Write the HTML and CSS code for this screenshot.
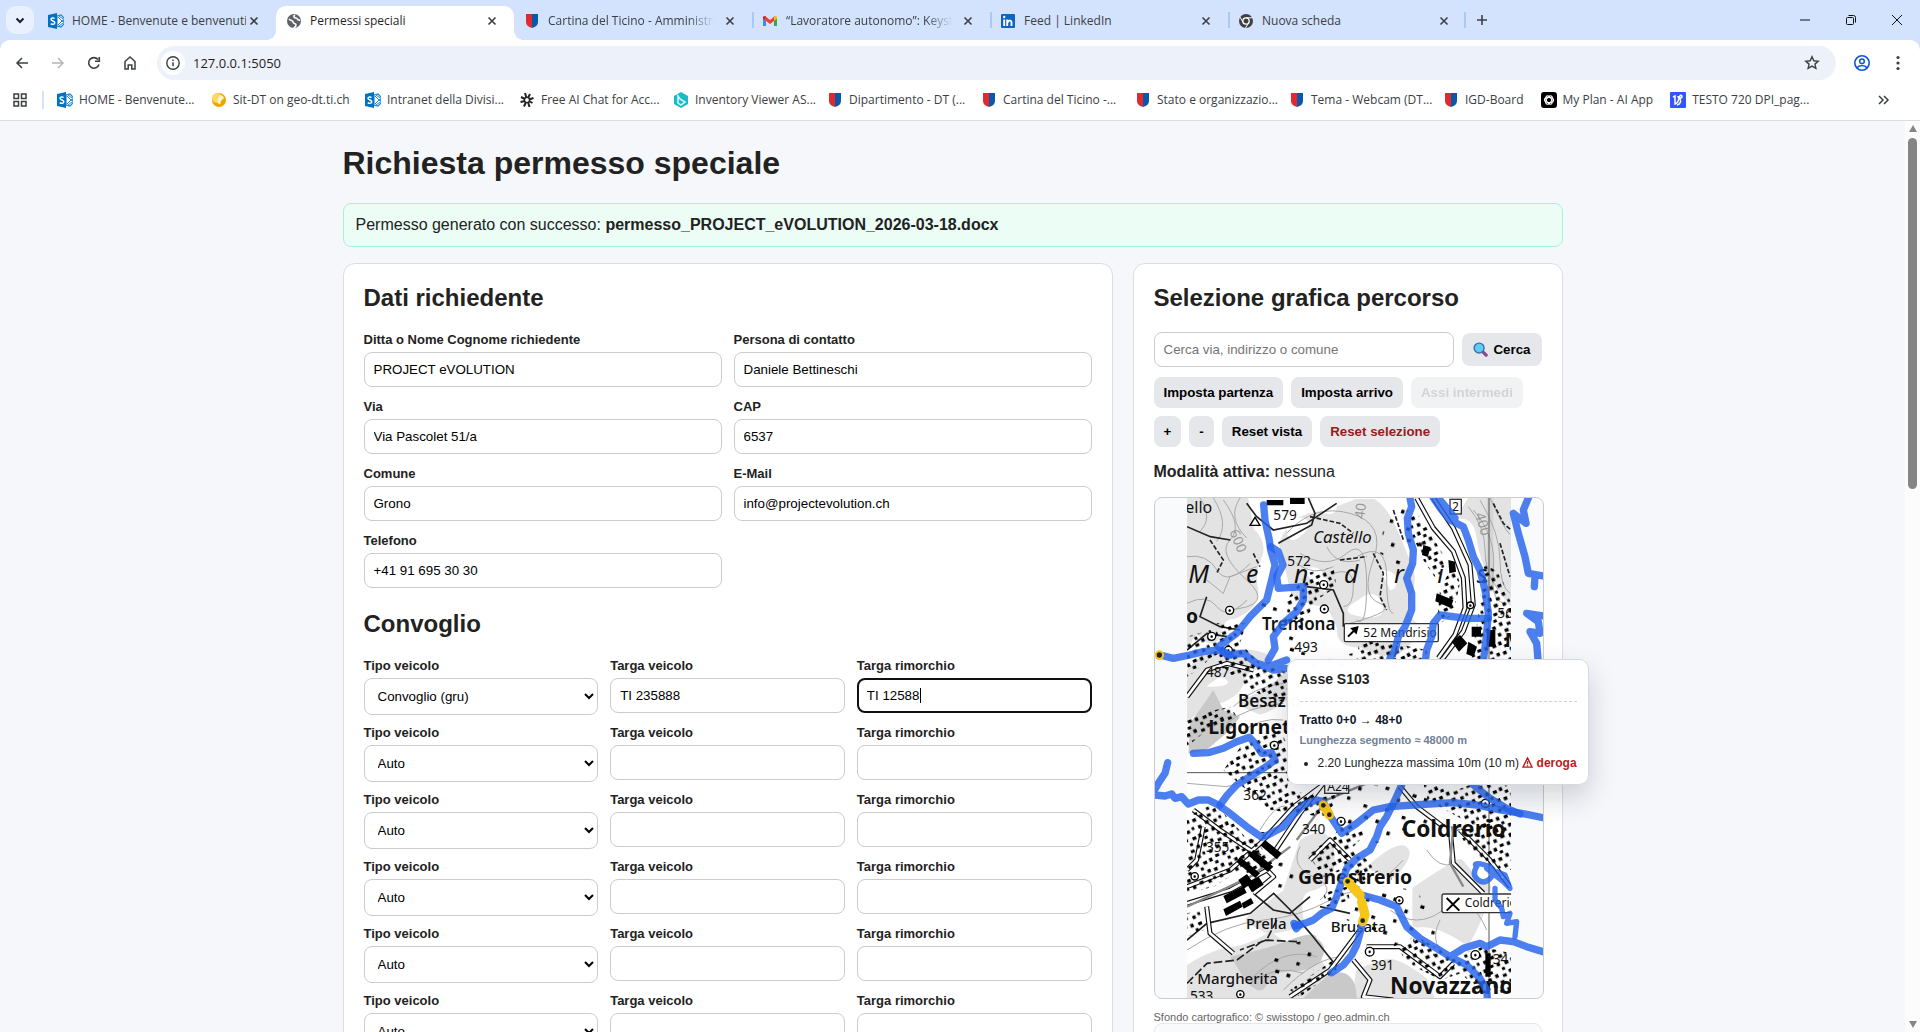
FILE: index.html
```html
<!DOCTYPE html>
<html lang="it">
<head>
<meta charset="utf-8">
<title>Permessi speciali</title>
<link rel="stylesheet" href="styles.css">
</head>
<body>
<svg class="defs" aria-hidden="true">
  <symbol id="sharepoint" viewBox="0 0 16 16"><path d="M9 3l4-1 3 3v2l-2 1 2 1v2l-3 3-4-1z" fill="#fff" stroke="#1b86d6" stroke-width="1.2"/><path d="M10 4l4 4-4 4M11 3l4 3M11 13l4-3" fill="none" stroke="#1b86d6" stroke-width="1"/><path d="M0 2l9-2v16l-9-2z" fill="#0072c6"/><path d="M6.600 5.500C5.500 4.700 3 4.600 3 6.300c0 2 3.800 1.400 3.800 3.500 0 1.800-2.700 1.800-4 .8" fill="none" stroke="#fff" stroke-width="1.500"/></symbol>
  <symbol id="shield" viewBox="0 0 12 16"><path d="M0 1h6v14C2 14 0 12 0 9z" fill="#e22a2e"/><path d="M6 1h6v8c0 3-2 5-6 6z" fill="#0a58a8"/></symbol>
  <symbol id="x" viewBox="0 0 16 16"><path d="M4.500 4.500l7 7m0-7l-7 7" stroke="#3c4043" stroke-width="1.600"/></symbol>
</svg>

<header class="browser">
  <div class="tabstrip">
    <button class="tab-search" aria-label="Cerca schede"><svg viewBox="0 0 16 16" width="16" height="16"><path d="M4.500 6.500L8 10l3.500-3.500" fill="none" stroke="#1f1f1f" stroke-width="2"/></svg></button>
    <div class="tab"><svg class="fav"><use href="#sharepoint"/></svg><span class="tab-title">HOME - Benvenute e benvenuti</span><button class="close" aria-label="Chiudi"><svg><use href="#x"/></svg></button></div>
    <div class="tab active"><svg class="fav" viewBox="0 0 16 16"><circle cx="8" cy="8" r="7" fill="#5f6368"/><path d="M3 6c2 2 4 1 4 3s3 1 3 3-2 2-2 3M9 2c-2 1-1 3 1 3s1 3 4 2" fill="none" stroke="#fff" stroke-width="1.600"/></svg><span class="tab-title">Permessi speciali</span><button class="close" aria-label="Chiudi"><svg><use href="#x"/></svg></button></div>
    <div class="tab"><svg class="fav"><use href="#shield"/></svg><span class="tab-title fade">Cartina del Ticino - Amministraz</span><button class="close" aria-label="Chiudi"><svg><use href="#x"/></svg></button></div>
    <div class="tab line"><svg class="fav" viewBox="0 0 16 16"><path d="M1 4v9h3V7.500z" fill="#4285f4"/><path d="M15 4v9h-3V7.500z" fill="#34a853"/><path d="M1 3.500L4 3v4.500l-3-2z" fill="#c5221f"/><path d="M3 3l5 4 5-4v4.200L8 11 3 7.200z" fill="#ea4335"/><path d="M12 3.500c1-1 3-.8 3 .8v1.200l-3 2.300z" fill="#fbbc04"/></svg><span class="tab-title fade">“Lavoratore autonomo”: Keysto</span><button class="close" aria-label="Chiudi"><svg><use href="#x"/></svg></button></div>
    <div class="tab line"><svg class="fav" viewBox="0 0 16 16"><rect x="1" y="1" width="14" height="14" rx="1" fill="#0a66c2"/><path d="M4.200 6.500V13M7.200 13V6.500M7.500 10c0-3 4-3.300 4-.5V13" fill="none" stroke="#fff" stroke-width="1.900"/><circle cx="4.200" cy="4" r="1.200" fill="#fff"/></svg><span class="tab-title">Feed | LinkedIn</span><button class="close" aria-label="Chiudi"><svg><use href="#x"/></svg></button></div>
    <div class="tab line last"><svg class="fav" viewBox="0 0 16 16"><circle cx="8" cy="8" r="7" fill="#3c4043"/><circle cx="8" cy="8" r="3.200" fill="#3c4043" stroke="#fff" stroke-width="1.300"/><path d="M8 4.800h6.500M5.200 9.600L2 4M10.700 9.700L7.500 15" stroke="#fff" stroke-width="1"/></svg><span class="tab-title">Nuova scheda</span><button class="close" aria-label="Chiudi"><svg><use href="#x"/></svg></button></div>
    <button class="icon-btn" aria-label="Nuova scheda"><svg viewBox="0 0 16 16" width="16" height="16"><path d="M8 3v10M3 8h10" stroke="#3c4043" stroke-width="1.600"/></svg></button>
    <div class="window-buttons">
      <button aria-label="Riduci"><svg viewBox="0 0 12 12" width="12" height="12"><path d="M1 6h10" stroke="#111"/></svg></button>
      <button aria-label="Ripristina"><svg viewBox="0 0 12 12" width="12" height="12"><path d="M3.500 1.500h5q2 0 2 2v5" fill="none" stroke="#111"/><rect x="1.500" y="3.500" width="7" height="7" rx="1" fill="none" stroke="#111"/></svg></button>
      <button aria-label="Chiudi finestra"><svg viewBox="0 0 12 12" width="12" height="12"><path d="M1 1l10 10M11 1L1 11" stroke="#111"/></svg></button>
    </div>
  </div>
  <div class="toolbar">
    <button class="nav" aria-label="Indietro"><svg viewBox="0 0 16 16" width="16" height="16"><path d="M14 8H3M8 3L3 8l5 5" fill="none" stroke="#3c4043" stroke-width="1.500"/></svg></button>
    <button class="nav" aria-label="Avanti"><svg viewBox="0 0 16 16" width="16" height="16"><path d="M2 8h11M8 3l5 5-5 5" fill="none" stroke="#b4b6b9" stroke-width="1.500"/></svg></button>
    <button class="nav" aria-label="Ricarica"><svg viewBox="0 0 16 16" width="16" height="16"><path d="M13 9.500A5.300 5.300 0 1 1 12 4.500M13.300 2v4.300H9" fill="none" stroke="#3c4043" stroke-width="1.600"/></svg></button>
    <button class="nav" aria-label="Pagina iniziale"><svg viewBox="0 0 16 16" width="16" height="16"><path d="M3 6.500L8 2l5 4.500V14h-3.200v-4H6.200v4H3z" fill="none" stroke="#3c4043" stroke-width="1.500"/></svg></button>
    <div class="omnibox">
      <span class="info"><svg viewBox="0 0 16 16" width="16" height="16"><circle cx="8" cy="8" r="6.200" fill="none" stroke="#3c4043" stroke-width="1.400"/><path d="M8 7.200v4M8 4.500v1.500" stroke="#3c4043" stroke-width="1.500"/></svg></span>
      <input class="url" aria-label="Indirizzo" value="127.0.0.1:5050">
      <button class="star" aria-label="Preferiti"><svg viewBox="0 0 16 16" width="16" height="16"><path d="M8 1.800l1.800 4 4.400.4-3.300 2.900 1 4.300L8 11.100l-3.900 2.300 1-4.300-3.300-2.900 4.400-.4z" fill="none" stroke="#3c4043" stroke-width="1.400"/></svg></button>
    </div>
    <button class="nav" aria-label="Profilo"><svg viewBox="0 0 18 18" width="18" height="18"><circle cx="9" cy="9" r="7.200" fill="none" stroke="#0b57d0" stroke-width="1.600"/><circle cx="9" cy="7.200" r="2.300" fill="none" stroke="#0b57d0" stroke-width="1.500"/><path d="M4 13.800c2-3 8-3 10 0" fill="none" stroke="#0b57d0" stroke-width="1.600"/></svg></button>
    <button class="nav" aria-label="Menu"><svg viewBox="0 0 16 16" width="16" height="16" fill="#3c4043"><circle cx="8" cy="2.500" r="1.600"/><circle cx="8" cy="8" r="1.600"/><circle cx="8" cy="13.500" r="1.600"/></svg></button>
  </div>
  <nav class="bookmarks">
    <svg class="apps" viewBox="0 0 16 16" width="16" height="16"><path d="M2 2h4.500v4.500H2zM9.500 2H14v4.500H9.500zM2 9.500h4.500V14H2zM9.500 9.500H14V14H9.500z" fill="none" stroke="#3c4043" stroke-width="1.500"/></svg>
    <a class="bm long first" href="#"><svg class="fav"><use href="#sharepoint"/></svg>HOME - Benvenute...</a>
    <a class="bm long" href="#"><svg class="fav" viewBox="0 0 16 16"><circle cx="8" cy="8" r="7" fill="#e9a800"/><circle cx="6" cy="6" r="5" fill="#ffd766"/><path d="M9 3c4 0 5 4 2 5s0 3-2 4-3-3-2-5z" fill="#fff3cf"/></svg>Sit-DT on geo-dt.ti.ch</a>
    <a class="bm long" href="#"><svg class="fav"><use href="#sharepoint"/></svg>Intranet della Divisi...</a>
    <a class="bm long" href="#"><svg class="fav" viewBox="0 0 16 16"><path d="M6 1l1.500 5M11 2L9 6M2 5l4 2M14.500 6L10 7.500M1.500 10L6 9M13.500 11L10 9M5 14.500L7 10M10.500 15L9 10" stroke="#222" stroke-width="2"/><circle cx="8" cy="8" r="2.600" fill="none" stroke="#222" stroke-width="1.400"/></svg>Free AI Chat for Acc...</a>
    <a class="bm long" href="#"><svg class="fav" viewBox="0 0 16 16"><path d="M8 0l7 4v8l-7 4-7-4V4z" fill="#1fb8c9"/><path d="M5 4v7l3 2 4-3-5-3z" fill="none" stroke="#d5fbff" stroke-width="1.500"/></svg>Inventory Viewer AS...</a>
    <a class="bm long" href="#"><svg class="fav"><use href="#shield"/></svg>Dipartimento - DT (...</a>
    <a class="bm long" href="#"><svg class="fav"><use href="#shield"/></svg>Cartina del Ticino -...</a>
    <a class="bm long" href="#"><svg class="fav"><use href="#shield"/></svg>Stato e organizzazio...</a>
    <a class="bm long" href="#"><svg class="fav"><use href="#shield"/></svg>Tema - Webcam (DT...</a>
    <a class="bm" href="#"><svg class="fav"><use href="#shield"/></svg>IGD-Board</a>
    <a class="bm" href="#"><svg class="fav" viewBox="0 0 16 16"><rect width="16" height="16" rx="3" fill="#000"/><g fill="none" stroke="#fff" stroke-width="1.100"><ellipse cx="8" cy="8" rx="4.600" ry="2.600"/><ellipse cx="8" cy="8" rx="4.600" ry="2.600" transform="rotate(60 8 8)"/><ellipse cx="8" cy="8" rx="4.600" ry="2.600" transform="rotate(120 8 8)"/></g></svg>My Plan - AI App</a>
    <a class="bm" href="#"><svg class="fav" viewBox="0 0 16 16"><rect width="16" height="16" rx="1" fill="#3355ff"/><path d="M3 5l2-1v8c4-1 4-5 4-8M8 4c0 3 4 3 4 0-2-2-3 1-2 3s1 5-3 6" fill="none" stroke="#fff" stroke-width="1.500"/></svg>TESTO 720 DPI_pag...</a>
    <button class="more" aria-label="Altri preferiti"><svg viewBox="0 0 16 16" width="16" height="16"><path d="M3 4l4 4-4 4M8 4l4 4-4 4" fill="none" stroke="#3c4043" stroke-width="1.500"/></svg></button>
  </nav>
</header>

<div class="viewport">
<main class="page">
<div class="container">
  <h1>Richiesta permesso speciale</h1>
  <div class="alert">Permesso generato con successo: <strong>permesso_PROJECT_eVOLUTION_2026-03-18.docx</strong></div>
  <div class="layout">
    <form class="card">
      <h2>Dati richiedente</h2>
      <div class="grid two">
        <label class="field">Ditta o Nome Cognome richiedente<input type="text" value="PROJECT eVOLUTION"></label>
        <label class="field">Persona di contatto<input type="text" value="Daniele Bettineschi"></label>
        <label class="field">Via<input type="text" value="Via Pascolet 51/a"></label>
        <label class="field">CAP<input type="text" value="6537"></label>
        <label class="field">Comune<input type="text" value="Grono"></label>
        <label class="field">E-Mail<input type="text" value="info@projectevolution.ch"></label>
        <label class="field">Telefono<input type="text" value="+41 91 695 30 30"></label>
      </div>
      <h2 class="next">Convoglio</h2>
      <div class="grid three">
        <label class="field">Tipo veicolo<select><option>Convoglio (gru)</option></select></label>
        <label class="field">Targa veicolo<input type="text" value="TI 235888"></label>
        <label class="field">Targa rimorchio<input class="focused" type="text" value="TI 12588"><span class="caret"></span></label>
        <label class="field">Tipo veicolo<select><option>Auto</option></select></label>
        <label class="field">Targa veicolo<input type="text"></label>
        <label class="field">Targa rimorchio<input type="text"></label>
        <label class="field">Tipo veicolo<select><option>Auto</option></select></label>
        <label class="field">Targa veicolo<input type="text"></label>
        <label class="field">Targa rimorchio<input type="text"></label>
        <label class="field">Tipo veicolo<select><option>Auto</option></select></label>
        <label class="field">Targa veicolo<input type="text"></label>
        <label class="field">Targa rimorchio<input type="text"></label>
        <label class="field">Tipo veicolo<select><option>Auto</option></select></label>
        <label class="field">Targa veicolo<input type="text"></label>
        <label class="field">Targa rimorchio<input type="text"></label>
        <label class="field">Tipo veicolo<select><option>Auto</option></select></label>
        <label class="field">Targa veicolo<input type="text"></label>
        <label class="field">Targa rimorchio<input type="text"></label>
      </div>
    </form>

    <section class="card">
      <h2>Selezione grafica percorso</h2>
      <div class="search">
        <input type="text" aria-label="Cerca" placeholder="Cerca via, indirizzo o comune">
        <button class="btn find"><svg viewBox="0 0 16 16" width="15" height="15"><path d="M10 10l4 4" stroke="#86488f" stroke-width="3.500" stroke-linecap="round"/><circle cx="6.500" cy="6.500" r="5.300" fill="#5fcdf0" stroke="#3b6fb0" stroke-width="1.500"/></svg>Cerca</button>
      </div>
      <div class="buttons">
        <button class="btn">Imposta partenza</button>
        <button class="btn">Imposta arrivo</button>
        <button class="btn" disabled>Assi intermedi</button>
      </div>
      <div class="buttons">
        <button class="btn">+</button>
        <button class="btn">-</button>
        <button class="btn">Reset vista</button>
        <button class="btn danger">Reset selezione</button>
      </div>
      <p class="mode"><strong>Modalità attiva:</strong> nessuna</p>
      <div class="map">
        <svg class="map-svg" viewBox="45 24 1164 1500" preserveAspectRatio="xMidYMid slice">
          <defs>
            <clipPath id="tile"><rect x="141" y="24" width="972" height="1500"/></clipPath>
            <pattern id="houses" width="88" height="80" patternUnits="userSpaceOnUse" patternTransform="rotate(-24)">
              <path d="M4 6h11v10H4zM28 2h10v11H28zM50 10h12v9H50zM72 3h10v10H72zM12 30h10v11H12zM36 26h12v10H36zM62 32h10v10H62zM2 54h10v11H2zM24 50h12v9H24zM46 52h10v11H46zM70 56h12v10H70zM80 28h8v9H80zM16 68h10v9H16zM56 70h9v9H56z" fill="#000"/>
            </pattern>
            <pattern id="sparse" width="120" height="104" patternUnits="userSpaceOnUse" patternTransform="rotate(17)">
              <path d="M6 10h11v10H6zM48 34h10v11H48zM90 8h12v10H90zM24 72h10v10H24zM78 80h11v10H78z" fill="#000"/>
            </pattern>
          </defs>
          <g clip-path="url(#tile)">
            <rect x="141" y="24" width="972" height="1500" fill="#fff"/>
            <g fill="#e3e3e3" stroke="#e3e3e3" stroke-width="26" stroke-linejoin="round">
              <path d="M141 24h170l20 100q40 40 20 80t-10 90-60 80q-40 0-50 50t-60-10l-40 50z"/>
              <path d="M430 160q30-70 90-80t130-40h50q30 20 55 75t40 95q30 50 5 110t25 90q-20 50-55 70t-105-20q-70 0-60-45-30-80-60-80t-80-30z"/>
              <path d="M1000 24h113v310q-30-50-55-85t-35-105-55-70z"/>
              <path d="M141 560q40-50 70-60t100-10q90 10 60 30-60 10-70 50t-70 60-90 50z"/>
              <path d="M310 640q70-20 130-80v50q-40 40-80 50z"/>
              <path d="M490 1060q90-60 80 70-10 50-60 60t-30 110q-40 10-90 20l-60-30 110-80z"/>
              <path d="M700 1130q70-60 90-50t-30 70zM830 1200q90-60 130-80 60 80 80 70-10 70-60 160-90-60-150-50z"/>
              <path d="M141 1440q80-50 130-55t120-45q70 50 100 40t50 55 50 89H141z"/>
              <path d="M660 1450q60-30 90-30t100 54l20 50H650z"/>
            </g>
            <g fill="#fff">
              <path d="M655 330q50-40 70 10t-60 40-10-50zM440 110q40-40 60-20t-20 50-40-30zM540 50q50-30 50 0t-40 20zM490 240q40-20 60 10t10 50-70-60z"/>
              <path d="M200 590q40-40 60-20t-60 20zM720 240q50 0 50 30t-20 30z"/>
            </g>
            <g fill="#c9c9c9">
              <path d="M150 700l50-70 20-30 30 60 50 20-30 40-70 60-55 10z"/>
              <path d="M270 1400q100-20 180-50t80-5q30 20 20 50t-40 40-70 10-60 40-70-20q-20-40-40-65z"/>
              <path d="M570 1450q40-10 60 10t20 64H490z"/>
              <path d="M1040 24h20v280h-20z" fill="#d5d5d5"/>
            </g>
            <g fill="none" stroke="#a9a9a9" stroke-width="3">
              <path d="M180 24q40 60 0 100M250 30q60 80 20 120t50 120-60 90M200 270l50 40 20-50 80-30M141 200q60-10 90 40t100-20M300 24q-40 60 20 120M141 340q60-30 90 10t90-20M220 24q50 80 10 130"/>
              <path d="M440 130q80-90 190-60t70 140 20 130-90 60M480 190q80 50 140 0t60 90-30 110M650 200q90-50 90 60t20 110M560 170q30 60 100 40M580 250q60-20 60 40t-30 60M470 220q50 40 110 10"/>
              <path d="M1000 60q70 80 60 180t40 100M1020 30q60 100 60 180t30 100M1050 24q40 90 60 110M985 50q50 60 50 130t40 120"/>
              <path d="M280 650q60-60 150-70M260 700q60-50 170-60M141 880l120 10 100-30M360 1020q60-100 90-60M300 730q60-50 130-40"/>
              <path d="M141 1380q120-80 230-90t200-60 130 0M430 1500q100-100 180-100M330 1480q80-60 160-30M750 1260q80 60 160 0t130 60M790 1110l-40 40 5 20M860 1080q40 60 80 40M900 1290q-40 80 40 120M340 1460q90-90 190-60M480 1070q-30 60 40 90t20 70"/>
            </g>
            <path d="M141 848h470M1047 24v1500" stroke="#555" stroke-width="3"/>
            <g fill="none" stroke="#222" stroke-width="5">
              <path d="M320 40l30 40 50 40 100-20 90-60M415 160l100-55 10-35-20-46M200 320l-20 60 60 30 60 10M141 480l60-50 60 10M500 290l80 10 30 70v40M141 110l70 30 60 10" />
              <path d="M141 1350l60-50 130-30 70-60 50 50 60 70 80 100M540 1250l90 20M340 1210l60 50 50 10 60-50"/>
              <path d="M410 1290l-30 60-80 30M141 1480l60-60 90-10 80-60 100 5" stroke-dasharray="26 9"/>
              <path d="M510 80l90 20 40 30M700 190l30 60-10 70 20 40M210 150l40 60-20 40M600 210l80-10M760 60l30 90M760 520l20-100M1060 40l30 60 23 20M1080 160l30 100M340 190l20 40" stroke-dasharray="14 6"/>
            </g>
            <!-- main roads: dark casing with a white core -->
            <g fill="none" stroke="#111" stroke-width="15" stroke-linejoin="round">
              <path d="M830 24l50 90 60 70 30 80 5 90-30 80-50 70M880 24l60 90 50 110 10 120-30 80-60 80M141 620l60-80 60-20 80 20M141 1190l130-50 90-80 100-110 80-60M400 1090l80-120 70-90M190 1010l-20 100-29 30M160 960l80 60 120 80M141 1240l130-40 110-60 20 20-60 50M200 1250l10 80 70 60M450 1520l120-80 90-120M680 1370h100l120 90 40-40M780 890l50 60 80 60M930 1010l10 110 90 90M960 1020l90 90 60 80M640 1410l50 60-20 50 90 10M510 1110l60-60 60 60"/>
            </g>
            <g fill="none" stroke="#fff" stroke-width="8" stroke-linejoin="round">
              <path d="M830 24l50 90 60 70 30 80 5 90-30 80-50 70M880 24l60 90 50 110 10 120-30 80-60 80M141 620l60-80 60-20 80 20M141 1190l130-50 90-80 100-110 80-60M400 1090l80-120 70-90M190 1010l-20 100-29 30M160 960l80 60 120 80M141 1240l130-40 110-60 20 20-60 50M200 1250l10 80 70 60M450 1520l120-80 90-120M680 1370h100l120 90 40-40M780 890l50 60 80 60M930 1010l10 110 90 90M960 1020l90 90 60 80M640 1410l50 60-20 50 90 10M510 1110l60-60 60 60"/>
            </g>
            <g fill="none" stroke="#888" stroke-width="7"><path d="M940 1010l-10 110 40 70M470 1050l90-120 120-50M141 1250l190-90 120-90"/></g>
            <g fill="url(#houses)">
              <path d="M141 440l70-20 30 60-70 60-29 20zM230 400h90l-20 60 60 60 90 30v90l-80-20-90-60-60-60z"/>
              <path d="M440 330l60-80 80-20 10 60-60 40-50 90-40-30zM660 440l100 20 100 20v30H650zM800 60l40 20 80 130-30 60-40-60-40-90z"/>
              <path d="M900 300l40-80 20 60-20 90-50 40zM1030 220l50 30 33 90v170h-120l20-120z"/>
              <path d="M141 690l40-20 90-20 20 30-90 40-60 50zM250 840l60-80 110-40 40 80-20 100 110 20 60-10-60 70-160-20z"/>
              <path d="M141 980l80-40 60 60 50 60-30 80-80 50-80 20zM250 1060l90-20 60 80-80 30zM850 880l100 20 80-30 83 20v160l-100-40-60-30-90-50z"/>
              <path d="M500 1090l70-40 60 20 90 70-60 40-50-40-60 20zM950 1020l60-20 103 10v130l-60-10-70-60zM570 1060l40-70 70 40-40 40z"/>
              <path d="M770 1370l60-30 110 60 90-30 83 20v120h-90l-60-60-60 20-100-50z"/>
              <path d="M550 1210l70-20 10 40-70 20zM141 1270l40-10 10 60-50 20zM450 1500l130-90 10 30-110 80z"/>
            </g>
            <g fill="url(#sparse)">
              <path d="M350 330l150 60 20 110-120-20zM740 40l60 20 60 110-80 60-60-40zM440 520l200-30v40H440zM620 880l250 20v100l-160 60-90-60z"/>
              <path d="M650 1180l180 20 60 110-130 60-140-80zM820 1270l70 10v120l-70-30zM390 1370l120-20 40 60-80 80-70-20zM240 1010l160 20-60 60zM370 1140l90-40 20 80-80 40z"/>
            </g>
            <g fill="#000">
              <path d="M925 210l20 5 3 30-20 5zM850 165l20 6-6 30-18-6zM935 455l25-20 22 25-25 25zM995 410h28v30h-28zM1040 420h26v50h-26zM985 455l26 15-10 30-22-8zM890 310l50 20-8 24-46-20z"/>
              <path d="M340 1080l60 50-16 16-60-50zM375 1050l50 40-14 18-50-42zM320 1180l36-20 15 24-36 22zM250 1218l60-30 10 20-60 32zM295 1170l26-18 18 26-28 18zM250 1258l50-26 8 18-50 28zM305 1240l28-16 8 16-30 16zM300 1100l60 50-14 14-56-48z"/>
              <path d="M380 30h50v16h-50zM450 24h44v18h-44zM1036 1390h16v70h-16z"/>
            </g>
            <g fill="#fff" stroke="#000" stroke-width="4">
              <circle cx="551" cy="284" r="12"/><circle cx="553" cy="357" r="12"/><circle cx="269" cy="361" r="12"/><circle cx="215" cy="439" r="12"/><circle cx="265" cy="481" r="12"/><circle cx="403" cy="766" r="12"/><circle cx="603" cy="994" r="12"/><circle cx="1036" cy="940" r="12"/><circle cx="689" cy="1385" r="13"/><circle cx="1006" cy="1395" r="13"/><circle cx="301" cy="1513" r="11"/><circle cx="164" cy="1159" r="11"/><circle cx="778" cy="1231" r="11"/><circle cx="991" cy="346" r="10"/>
              <path d="M330 106l15-24 15 24z" fill="none"/>
            </g>
            <path d="M551 284v1M553 357v1M269 361v1M215 439v1M265 481v1M403 766v1M603 994v1M1036 940v1M689 1385v1M1006 1395v1M301 1513v1M164 1159v1M778 1231v1M991 346v1" stroke="#000" stroke-width="7" stroke-linecap="round"/>
            <g class="place contour"><text x="268" y="125" transform="rotate(68 268 125)">600</text><text x="1005" y="72" transform="rotate(74 1005 72)">400</text><text x="672" y="88" transform="rotate(-82 672 88)">40</text></g>
            <g class="place">
              <text x="136" y="70" class="t48">ello</text>
              <text x="400" y="91">579</text><text x="442" y="227">572</text><text x="463" y="485">493</text><text x="198" y="560">487</text>
              <text x="310" y="930">362</text><text x="486" y="1031">340</text><text x="198" y="1086">355</text><text x="692" y="1441">391</text><text x="1058" y="1421">34</text><text x="1072" y="385">56</text><text x="150" y="1532">533</text>
              <text x="520" y="158" class="it">Castello</text>
            </g>
            <g class="place wide"><text x="145" y="280">M</text><text x="318" y="280">e</text><text x="462" y="280">n</text><text x="612" y="280">d</text><text x="762" y="280">r</text><text x="892" y="280">i</text><text x="1010" y="280">s</text></g>
            <g class="place village">
              <text x="138" y="398" class="b">o</text><text x="366" y="419">Tremona</text><text x="294" y="652">Besazio</text><text x="1094" y="470" class="b">M</text>
              <text x="205" y="732" class="b">Ligornetto</text><text x="785" y="1040" class="b big">Coldrerio</text><text x="474" y="1182" class="b">Genestrerio</text>
              <text x="318" y="1317" class="s">Prella</text><text x="572" y="1327" class="s">Brusata</text><text x="172" y="1483" class="s">Margherita</text><text x="148" y="1483" class="s">.</text><text x="750" y="1511" class="b big">Novazzano</text>
            </g>
            <g fill="#fff" stroke="#333" stroke-width="4"><rect x="613" y="401" width="282" height="54" rx="4"/><rect x="906" y="1212" width="240" height="56" rx="6"/><rect x="930" y="28" width="34" height="44"/><rect x="554" y="875" width="72" height="35"/></g>
            <path d="M624 440l20-20M636 416l16-4-4 16zM920 1224l38 38M958 1224l-38 38" stroke="#000" stroke-width="6"/>
            <g class="place sign"><text x="670" y="442">52 Mendrisio</text><text x="974" y="1252">Coldrerio</text><text x="936" y="64">2</text><text x="562" y="903">A24</text></g>
          </g>
          <g class="route">
            <path d="M371 45l4 45 13 60 4 30 13 45-10 45-15 60-50 50-40 50-55 40 27 25 48-5 40 30 35 10 55-20M350 520l50 20 40-5"/>
            <path d="M392 170l23 15 14 40-19 35 5 35 75-5v40l-20 35-40 35-30 40 5 35-20 35"/>
            <path d="M60 495l40 10 50-10 40-10 45-5 35 15"/>
            <path d="M810 24l5 26-13 35 3 45 15 50-2 40-18 45 15 45v50l-20 50-20 30-10 40-15 25"/>
            <path d="M880 24l25 36 25 30 40 20 15 40 15 50 20 40 15 60 10 70-5 60-10 85M895 24l50 60"/>
            <path d="M1045 385h-65l-80-10-20 25-5 40-15 40-5 40"/>
            <path d="M1165 24l-15 36 8 40-38-30 15 60 20 70 10 50 44 8M1185 258l-2 32M1209 378l-49-8 35 25 5 35-30-5 20 35 5 60"/>
            <path d="M160 790l45-2 45-13 40-20 38-13 17 18 20 30 30-2 10 22-30 22-45 28-40 25-28 30-22 30"/>
            <path d="M83 818l-8 32-20 30-8 15M45 915l30 3 20-6 10 13 20-5 20 22 30-12h30l30 15 35 25 50 40 45 32"/>
            <path d="M378 1038l52-28 30-35 30-30 40-15 20 5 15 35 40 60 45-30 50-40 50-10 70-5 120-7 70 7 70 15 65 10 64 13"/>
            <path d="M785 885l-20 45-25 50-20 30-10 30-20 40-40 25-30 30-8 25-12 30-10 30-15 35-30 15-25 20-25 10-30 8"/>
            <path d="M1000 885l50 40 50 30 40 17M462 1300l15 8-8 8z"/>
            <path d="M665 1215l55 15 50 20 15 30 15 30 40 35 50 30 40 25 50 25 40 40 20 35 2 24M930 1400l40-25 50-15 20 10 40-20 40 5 40 15 49 15"/>
          </g>
          <g class="route thin">
            <path d="M1010 1130q-16 25 5 40t40-10-20-35-25 5M1040 1135l50 40 20 20-15-40-25-10M1065 1195v35l20 25 5 25 20-10-10 30 30-5-5 45"/>
          </g>
          <g class="route"><path d="M668 1295l-8 35-10 35-15 30-25 30-35 23"/></g>
          <g class="selected"><path d="M623 1175l37 40M665 1235l10 40-7 20M550 945l18 30M58 495v1"/></g>
          <g fill="#222"><circle cx="623" cy="1174" r="7"/><circle cx="668" cy="1292" r="7"/><circle cx="550" cy="946" r="7"/><circle cx="568" cy="974" r="7"/><circle cx="58" cy="495" r="8"/></g>
        </svg>
        <div class="tooltip" role="tooltip">
          <strong class="tip-title">Asse S103</strong>
          <strong class="tip-range">Tratto 0+0 → 48+0</strong>
          <span class="tip-length">Lunghezza segmento ≈ 48000 m</span>
          <ul><li>2.20 Lunghezza massima 10m (10 m) <b><svg viewBox="0 0 12 12" width="11" height="11"><path d="M6 1l5 10H1zM6 4.500v3.500M6 9v1" fill="none" stroke="#b91c1c" stroke-width="1.500"/></svg> deroga</b></li></ul>
        </div>
      </div>
      <p class="credit">Sfondo cartografico: © swisstopo / geo.admin.ch</p>
      <div class="panel"></div>
    </section>
  </div>
</div>
</main>
<div class="scrollbar" aria-hidden="true"><i class="up"></i><span class="thumb"></span><i class="down"></i></div>
</div>
</body>
</html>
```
FILE: styles.css
```css
* { box-sizing: border-box; }
body { margin: 0; height: 100vh; display: flex; flex-direction: column; overflow: hidden; font-family: Arial, "Liberation Sans", sans-serif; font-size: 16px; line-height: 18px; color: #222; }
.defs { position: absolute; width: 0; height: 0; }
button { border: 0; padding: 0; background: none; font-family: inherit; display: flex; align-items: center; justify-content: center; }

/* browser window */
.browser { flex: none; background: #d3e3fd; font-family: "Segoe UI", "Open Sans", sans-serif; font-size: 12px; color: #3c4043; }
.fav { width: 16px; height: 16px; flex: none; }
.tabstrip { height: 40px; display: flex; align-items: center; padding-left: 6px; }
.tab-search { width: 28px; height: 28px; border-radius: 10px; background: #e9f1fe; margin-right: 4px; }
.tab { position: relative; width: 238px; height: 34px; align-self: flex-end; padding: 0 14px 4px 10px; display: flex; align-items: center; gap: 8px; }
.tab-title { flex: 1; margin-right: -8px; white-space: nowrap; overflow: hidden; }
.fade { mask-image: linear-gradient(90deg, #000 80%, transparent 96%); }
.close { width: 16px; height: 16px; }
.close svg { width: 16px; height: 16px; }
.active { background: #fff; border-radius: 10px 10px 0 0; color: #1f1f1f; }
.active::before, .active::after { content: ""; position: absolute; bottom: 0; width: 10px; height: 10px; }
.active::before { left: -10px; background: radial-gradient(circle at 0 0, #d3e3fd 10px, #fff 10px); }
.active::after { right: -10px; background: radial-gradient(circle at 100% 0, #d3e3fd 10px, #fff 10px); }
.line::before, .last::after { content: ""; position: absolute; left: 0; top: 6px; width: 2px; height: 16px; background: #a8c7fa; }
.last::after { left: auto; right: 0; }
.icon-btn { width: 32px; height: 28px; }
.window-buttons { margin-left: auto; display: flex; }
.window-buttons button { width: 46px; height: 40px; }
.toolbar { background: #fff; border-radius: 10px 10px 0 0; height: 44px; display: flex; align-items: center; padding: 2px 4px 0; }
.nav { width: 36px; height: 34px; }
.omnibox { flex: 1; height: 34px; margin: 0 8px 0 9px; padding: 0 16px 0 4px; border-radius: 17px; background: #edf1fa; display: flex; align-items: center; gap: 8px; }
.info { width: 24px; height: 24px; border-radius: 12px; background: #fff; display: flex; align-items: center; justify-content: center; }
.url { flex: 1; border: 0; padding: 0; background: none; font: 13px "Segoe UI", "Open Sans", sans-serif; color: #1f1f1f; }
.bookmarks { background: #fff; height: 37px; border-bottom: 1px solid #dcdcdc; display: flex; align-items: center; padding: 0 28px 5px 12px; }
.apps { flex: none; margin-right: 14px; }
.bm { flex: none; display: flex; align-items: center; gap: 6px; white-space: nowrap; color: inherit; text-decoration: none; margin-right: 17px; }
.long { width: 137px; }
.first { width: 152px; border-left: 2px solid #d3e3fd; padding-left: 13px; }
.more { margin-left: auto; }

/* page */
.viewport { flex: 1; min-height: 0; display: flex; overflow: hidden; background: #f5f7fb; }
.page { flex: 1; overflow: hidden; }
.container { max-width: 1220px; margin: 24px auto; }
h1 { margin: 0 0 22px; font-size: 32px; line-height: 36px; }
h2 { margin: 0 0 20px; font-size: 24px; line-height: 28px; }
.next { margin-top: 22px; }
.alert { padding: 12px; border: 1px solid #a7f3d0; border-radius: 8px; background: #ecfdf5; margin-bottom: 16px; }
.layout { display: grid; grid-template-columns: 77fr 43fr; gap: 20px; align-items: start; }
.card { min-width: 0; padding: 20px; border: 1px solid #ddd; border-radius: 12px; background: #fff; }
.grid { display: grid; column-gap: 12px; align-items: start; }
.two { grid-template-columns: repeat(2, 1fr); row-gap: 12px; }
.three { grid-template-columns: repeat(3, 1fr); row-gap: 10px; }
.field { position: relative; display: flex; flex-direction: column; gap: 5px; min-width: 0; font-size: 13px; line-height: 15px; font-weight: bold; }
.card input, .card select { min-width: 0; padding: 9px; border: 1px solid #ccc; border-radius: 8px; background: #fff; color: #000; font-family: inherit; }
.card input { height: 35px; }
.card select { height: 37px; }
.card .focused { border: 2px solid #101010; padding: 8px; }
.caret { position: absolute; left: 63px; top: 30px; width: 1px; height: 15px; background: #000; }
.search { display: flex; align-items: center; gap: 8px; margin-bottom: 10px; }
.search input { flex: 1; }
.buttons { display: flex; gap: 8px; margin-bottom: 8px; }
.btn { height: 31px; padding: 0 10px; border-radius: 8px; background: #e5e7eb; color: #000; font-weight: bold; white-space: nowrap; }
.find { height: 33px; padding: 0 11px; gap: 5px; }
.btn:disabled { opacity: .5; color: #aaa; }
.danger { color: #991b1b; }
.mode { margin: 16px 0; }
.map { position: relative; box-sizing: content-box; width: 100%; border: 1px solid #ccc; border-radius: 8px; background: #f8fafc; }
.map-svg { display: block; width: 100%; height: 500px; border-radius: 7px; }
.place { font: 41px "Noto Sans", sans-serif; fill: #111; }
.place .t48 { font-size: 48px; }
.contour { fill: #999; }
.place .it { font-size: 50px; font-style: italic; }
.wide { font: italic 74px "Noto Sans", sans-serif; }
.village { font-size: 51px; font-weight: 600; }
.village .b { font-size: 58px; font-weight: bold; }
.village .big { font-size: 68px; }
.village .s { font-size: 45px; font-weight: 500; }
.sign { font-size: 36px; }
.route { fill: none; stroke: #2563eb; stroke-opacity: .82; stroke-width: 22px; stroke-linecap: round; stroke-linejoin: round; }
.thin { stroke-width: 16px; }
.selected { fill: none; stroke: #f5c518; stroke-width: 28px; stroke-linecap: round; stroke-linejoin: round; }
.tooltip { position: absolute; left: 132px; top: 161px; padding: 11px 11px 13px 12px; border: 1px solid #d5d9e0; border-radius: 10px; background: rgba(255, 255, 255, .98); box-shadow: 0 12px 28px rgba(15, 23, 42, .18); display: flex; flex-direction: column; font-size: 12px; line-height: 16px; white-space: nowrap; }
.tip-title { font-size: 14px; padding-bottom: 14px; border-bottom: 1px dashed #cbd5e1; margin-bottom: 10px; }
.tip-range { color: #0f172a; }
.tip-length { margin: 4px 0 7px; font-size: 11px; font-weight: bold; color: #718096; }
.tooltip ul { margin: 0; padding-left: 18px; }
.tooltip b { color: #b91c1c; }
.tooltip b svg { vertical-align: -1px; }
.credit { margin: 12px 0 0; font-size: 11px; line-height: 12px; color: #666; }
.panel { height: 120px; border: 1px solid #e5e7eb; border-radius: 8px; background: #f8fafc; }
.scrollbar { width: 15px; background: #fcfcfc; display: flex; flex-direction: column; align-items: center; padding: 4px 0; }
.thumb { width: 9px; height: 351px; border-radius: 5px; background: #858585; margin: 6px 0 auto; }
.up, .down { border: 4px solid transparent; }
.up { border-top: 0; border-bottom: 7px solid #858585; }
.down { border-bottom: 0; border-top: 7px solid #858585; }
```
